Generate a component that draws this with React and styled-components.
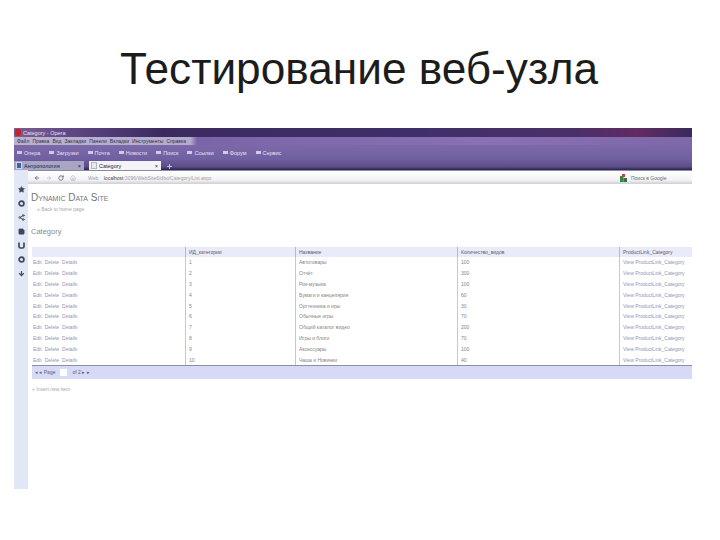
import React from "react";
import styled, { createGlobalStyle } from "styled-components";
import { Star, Share2, StickyNote, ArrowDown, ArrowLeft, ArrowRight, RotateCw, Home, Plus } from "lucide-react";

const GlobalStyle = createGlobalStyle`
  html, body { margin: 0; padding: 0; background: #fff; }
  * { box-sizing: border-box; }
`;

const Slide = styled.div`
  width: 720px;
  height: 540px;
  overflow: hidden;
  background: #fff;
  font-family: "Liberation Sans", Arial, sans-serif;
  padding: 0 28px 0 14px;
`;

const SlideTitle = styled.h1`
  margin: 0;
  height: 128px;
  padding: 43px 0 0 106px;
  font-size: 44.2px;
  line-height: 52px;
  font-weight: 400;
  color: #1c1c1c;
  white-space: nowrap;
`;

const Browser = styled.div`
  width: 678px;
  height: 361px;
  display: flex;
  flex-direction: column;
`;

const TitleBar = styled.div`
  height: 9px;
  display: flex;
  align-items: center;
  gap: 2px;
  padding-left: 1px;
  background: linear-gradient(90deg, #7d5f93 0%, #5d4681 9%, #3b2a60 22%, #3f2f68 60%, #4a3068 82%, #612a62 92%, #3a2a5c 100%);
  color: #e8e0ee;
  font-size: 5.5px;
`;

const OperaBadge = styled.span`
  width: 6px;
  height: 7px;
  border-radius: 2px;
  background: #c8202c;
`;

const MenuBar = styled.div`
  height: 8px;
  background: linear-gradient(90deg, #b9b2d0 0%, #b4abcd 26%, #7a65a8 27%, #8a70b4 70%, #7d68a8 100%);
`;

const MenuRow = styled.div`
  width: 176px;
  height: 100%;
  display: flex;
  align-items: center;
  justify-content: space-between;
  padding: 0 4px 0 3px;
  font-size: 5px;
  color: #33304a;
`;

const BookmarkBar = styled.div`
  height: 15px;
  display: flex;
  align-items: center;
  gap: 9px;
  padding-left: 3px;
  background: linear-gradient(180deg, #7d69a9 0%, #6e5fa2 100%);
  color: #e6e2f2;
  font-size: 5.5px;
`;

const Bookmark = styled.span`
  display: flex;
  align-items: center;
  gap: 2px;
  &::before {
    content: "";
    width: 5px;
    height: 3px;
    background: #cfc9e4;
  }
`;

const TabBar = styled.div`
  height: 10px;
  display: flex;
  align-items: flex-end;
  gap: 5px;
  background: linear-gradient(180deg, #6e5b9c 0%, #5d4d8a 65%, #2d2450 100%);
`;

const Tab = styled.div`
  width: ${(p) => p.$w}px;
  height: 9px;
  display: flex;
  align-items: center;
  justify-content: space-between;
  padding: 0 3px 0 2px;
  font-size: 5.5px;
  background: ${(p) => (p.$active ? "#f4f4f8" : "#a9a5c4")};
  color: #26243c;
`;

const Favicon = styled.span`
  width: 6px;
  height: 7px;
  margin-right: 2px;
  background: ${(p) => (p.$active ? "#e8e8ee" : "#3d62a8")};
  border: 1px solid ${(p) => (p.$active ? "#b5b5bd" : "#d0d6ea")};
`;

const TabLabel = styled.span`
  flex: 1;
  white-space: nowrap;
  overflow: hidden;
`;

const Main = styled.div`
  flex: 1;
  display: flex;
  min-height: 0;
`;

const Sidebar = styled.div`
  width: 14px;
  display: flex;
  flex-direction: column;
  align-items: center;
  gap: 7px;
  padding-top: 16px;
  background: #e2e7f5;
  color: #3d4a5e;
`;

const Page = styled.div`
  flex: 1;
  min-width: 0;
  display: flex;
  flex-direction: column;
`;

const AddressBar = styled.div`
  height: 14px;
  display: flex;
  align-items: center;
  padding-left: 6px;
  gap: 6px;
  background: linear-gradient(180deg, #fff 0%, #f3f3f6 70%, #cfcfd3 100%);
  border-top: 1px solid #8c8aa0;
  color: #5a6270;
`;

const UrlText = styled.span`
  flex: 1;
  font-size: 5px;
  color: #9a9ea6;
  margin-left: 6px;
  white-space: nowrap;
  b { color: #454952; font-weight: 400; }
`;

const SearchBox = styled.div`
  width: 72px;
  display: flex;
  align-items: center;
  gap: 4px;
  font-size: 5px;
  color: #6a6d76;
`;

const Content = styled.div`
  flex: 1;
  padding: 8px 0 0 3px;
  background: #fff;
`;

const SiteName = styled.div`
  font-size: 10px;
  line-height: 12px;
  font-variant: small-caps;
  color: #777;
  white-space: nowrap;
`;

const BackLink = styled.div`
  margin: 1px 0 0 6px;
  font-size: 5px;
  line-height: 8px;
  color: #a8a8a8;
`;

const PageHeading = styled.div`
  margin-top: 13px;
  font-size: 7.5px;
  line-height: 11px;
  color: #8a8a8a;
`;

const Grid = styled.div`
  margin: 10px 0 0 1px;
  display: grid;
  grid-template-columns: 153px 110px 162px 162px 1fr;
  font-size: 5px;
`;

const HeadCell = styled.div`
  height: 10px;
  display: flex;
  align-items: center;
  padding-left: 3px;
  background: #e9ebfa;
  color: #5c5c68;
  white-space: nowrap;
  overflow: hidden;
  border-left: ${(p) => (p.$first ? "none" : "1px solid #b9b9c2")};
`;

const Cell = styled.div`
  height: 10.8px;
  display: flex;
  align-items: center;
  gap: 3px;
  padding-left: ${(p) => (p.$first ? "1px" : "3px")};
  background: #fff;
  color: ${(p) => (p.$link ? "#9095b8" : "#858585")};
  white-space: nowrap;
  overflow: hidden;
  border-left: ${(p) => (p.$first ? "none" : "1px solid #c8c8d0")};
`;

const Pager = styled.div`
  height: 14px;
  margin-left: 1px;
  display: flex;
  align-items: center;
  gap: 2px;
  padding-left: 3px;
  background: #d6daf6;
  border-top: 1px solid #8d8fa8;
  font-size: 5px;
  color: #5c5e78;
`;

const PageInput = styled.span`
  width: 7px;
  height: 7px;
  background: #fff;
  margin: 0 3px;
`;

const InsertLink = styled.div`
  margin: 6px 0 0 1px;
  font-size: 5px;
  line-height: 8px;
  color: #a8a8a8;
`;

const RingIcon = () => (
  <svg width="7" height="7" viewBox="0 0 7 7">
    <circle cx="3.5" cy="3.5" r="2.4" fill="none" stroke="currentColor" strokeWidth="1.7" />
  </svg>
);

const PocketIcon = () => (
  <svg width="7" height="7" viewBox="0 0 7 7">
    <path d="M1 .5v4a1.5 1.5 0 0 0 1.5 1.5h2A1.5 1.5 0 0 0 6 4.5v-4" fill="none" stroke="currentColor" strokeWidth="1.7" />
  </svg>
);

const GoogleIcon = () => (
  <svg width="7" height="8" viewBox="0 0 7 8">
    <rect x="0" y="2" width="3.5" height="6" fill="#2f8a45" />
    <rect x="3.5" y="4" width="3.5" height="4" fill="#3c6e48" />
    <rect x="2" y="0" width="3" height="3" fill="#c8404a" />
  </svg>
);

const rows = [
  ["1", "Автотовары", "100"],
  ["2", "Отчёт", "300"],
  ["3", "Рок-музыка", "100"],
  ["4", "Бумаги и канцелярия", "60"],
  ["5", "Оргтехника и иры", "30"],
  ["6", "Обычные игры", "70"],
  ["7", "Общий каталог видео", "200"],
  ["8", "Игры и блоги", "70"],
  ["9", "Аксессуары", "100"],
  ["10", "Чаша и Новинки", "40"],
];

const menu = ["Файл", "Правка", "Вид", "Закладки", "Панели", "Вкладки", "Инструменты", "Справка"];
const bookmarks = ["Опера", "Загрузки", "Почта", "Новости", "Поиск", "Ссылки", "Форум", "Сервис"];

export default function App() {
  return (
    <Slide>
      <GlobalStyle />
      <SlideTitle>Тестирование веб-узла</SlideTitle>
      <Browser>
        <TitleBar>
          <OperaBadge />
          Category - Opera
        </TitleBar>
        <MenuBar>
          <MenuRow>
            {menu.map((m) => (
              <span key={m}>{m}</span>
            ))}
          </MenuRow>
        </MenuBar>
        <BookmarkBar>
          {bookmarks.map((b) => (
            <Bookmark key={b}>{b}</Bookmark>
          ))}
        </BookmarkBar>
        <TabBar>
          <Tab $w={70}>
            <Favicon />
            <TabLabel>Антропология</TabLabel>×
          </Tab>
          <Tab $w={72} $active>
            <Favicon $active />
            <TabLabel>Category</TabLabel>×
          </Tab>
          <Plus size={7} color="#d8d2ee" strokeWidth={3} />
        </TabBar>
        <Main>
          <Sidebar>
            <Star size={7} fill="currentColor" />
            <RingIcon />
            <Share2 size={7} strokeWidth={3} />
            <StickyNote size={7} fill="currentColor" />
            <PocketIcon />
            <RingIcon />
            <ArrowDown size={7} strokeWidth={4} />
          </Sidebar>
          <Page>
            <AddressBar>
              <ArrowLeft size={6} strokeWidth={3} />
              <ArrowRight size={6} strokeWidth={2} color="#a4a8b0" />
              <RotateCw size={6} strokeWidth={3} />
              <Home size={6} strokeWidth={2} color="#a4a8b0" />
              <UrlText>
                Web &nbsp;&nbsp;&nbsp;<b>localhost</b>:3096/WebSite6/dbo/Category/List.aspx
              </UrlText>
              <SearchBox>
                <GoogleIcon />
                Поиск в Google
              </SearchBox>
            </AddressBar>
            <Content>
              <SiteName>Dynamic Data Site</SiteName>
              <BackLink>« Back to home page</BackLink>
              <PageHeading>Category</PageHeading>
              <Grid>
                <HeadCell $first />
                <HeadCell>ИД_категории</HeadCell>
                <HeadCell>Название</HeadCell>
                <HeadCell>Количество_видов</HeadCell>
                <HeadCell>ProductLink_Category</HeadCell>
                {rows.map(([id, name, count]) => (
                  <React.Fragment key={id}>
                    <Cell $first $link>
                      <span>Edit</span>
                      <span>Delete</span>
                      <span>Details</span>
                    </Cell>
                    <Cell>{id}</Cell>
                    <Cell>{name}</Cell>
                    <Cell>{count}</Cell>
                    <Cell $link>View ProductLink_Category</Cell>
                  </React.Fragment>
                ))}
              </Grid>
              <Pager>
                ◂ ◂ Page <PageInput /> of 2 ▸ ▸
              </Pager>
              <InsertLink>+ Insert new item</InsertLink>
            </Content>
          </Page>
        </Main>
      </Browser>
    </Slide>
  );
}
